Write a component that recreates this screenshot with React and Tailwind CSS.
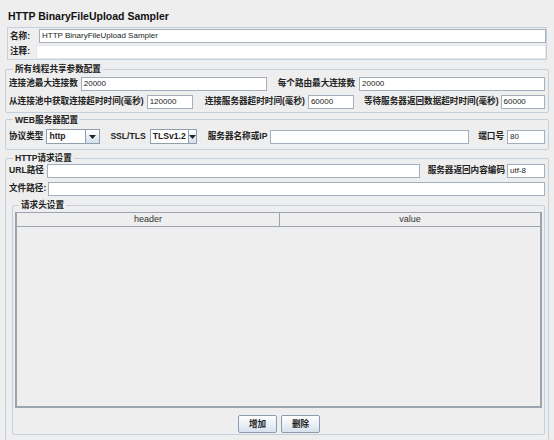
// App.jsx — JMeter-style "HTTP BinaryFileUpload Sampler" settings panel.

const cjk = { fontFamily: '"Liberation Sans", "Noto Sans CJK SC", sans-serif' };

function Field({ value = '', className = '' }) {
  return (
    <div
      className={`h-[14px] bg-white border border-[#a3afbb] flex items-center px-[2px] text-[8px] text-[#222] leading-none overflow-hidden whitespace-nowrap ${className}`}
    >
      {value}
    </div>
  );
}

function Label({ children, className = '' }) {
  return (
    <span className={`text-[8.6px] font-bold text-[#222] whitespace-nowrap leading-none ${className}`}>
      {children}
    </span>
  );
}

function Combo({ value, className = '' }) {
  return (
    <div className={`h-[15px] flex border border-[#8f9fae] bg-white ${className}`}>
      <div className="flex-1 flex items-center px-[2px] text-[8.6px] font-bold text-[#222] leading-none">{value}</div>
      <div className="w-[14px] border-l border-[#8f9fae] bg-gradient-to-b from-[#ffffff] to-[#d3dfeb] flex items-center justify-center">
        <svg width="7" height="4" viewBox="0 0 7 4">
          <path d="M0 0 H7 L3.5 4 Z" fill="#222" />
        </svg>
      </div>
    </div>
  );
}

function Group({ title, className = '', children }) {
  return (
    <fieldset className={`border border-[#c4d0dc] rounded-[2px] ${className}`}>
      <legend className="ml-[4px] px-[2px] text-[8.6px] font-bold text-[#222] leading-none">{title}</legend>
      {children}
    </fieldset>
  );
}

function Button({ children }) {
  return (
    <div className="w-[39px] h-[18px] border border-[#8d9cad] rounded-[2px] bg-gradient-to-b from-[#ffffff] to-[#d6e2ee] flex items-center justify-center text-[8.6px] font-bold text-[#222]">
      {children}
    </div>
  );
}

export default function App() {
  return (
    <div className="w-[554px] h-[440px] overflow-hidden bg-[#eeeeee] px-[5px] pt-[9px]" style={cjk}>
      <div className="pl-[3px] text-[10.5px] font-bold text-[#111] leading-[14px]">HTTP BinaryFileUpload Sampler</div>

      <div className="mt-[4px] ml-[2px] mr-[2px] border border-[#c4d0dc] flex flex-col">
        <div className="flex items-center h-[16px] pl-[2px]">
          <Label className="w-[29px]">名称:</Label>
          <Field value="HTTP BinaryFileUpload Sampler" className="flex-1" />
        </div>
        <div className="flex items-center h-[15px] pl-[2px]">
          <Label className="w-[26px]">注释:</Label>
          <Field className="flex-1 border-[#e2e6ea]" />
        </div>
      </div>

      <Group title="所有线程共享参数配置" className="mt-[5px] px-[3px] pb-[3px] flex flex-col gap-[4px]">
        <div className="flex items-center mt-[3px]">
          <Label>连接池最大连接数</Label>
          <Field value="20000" className="flex-1 ml-[3px]" />
          <Label className="ml-[11px]">每个路由最大连接数</Label>
          <Field value="20000" className="flex-1 ml-[4px]" />
        </div>
        <div className="flex items-center">
          <Label>从连接池中获取连接超时时间(毫秒)</Label>
          <Field value="120000" className="w-[46px] ml-[3px]" />
          <Label className="ml-[12px]">连接服务器超时时间(毫秒)</Label>
          <Field value="60000" className="w-[46px] ml-[3px]" />
          <Label className="ml-[10px]">等待服务器返回数据超时时间(毫秒)</Label>
          <Field value="60000" className="flex-1 ml-[2px]" />
        </div>
      </Group>

      <Group title="WEB服务器配置" className="mt-[3px] px-[3px] pb-[5px]">
        <div className="flex items-center mt-[5px]">
          <Label>协议类型</Label>
          <Combo value="http" className="w-[54px] ml-[3px]" />
          <Label className="ml-[10px]">SSL/TLS</Label>
          <Combo value="TLSv1.2" className="w-[47px] ml-[4px]" />
          <Label className="ml-[11px]">服务器名称或IP</Label>
          <Field className="w-[199px] ml-[3px]" />
          <Label className="ml-auto">端口号</Label>
          <Field value="80" className="w-[38px] ml-[3px]" />
        </div>
      </Group>

      <Group title="HTTP请求设置" className="mt-[4px] px-[3px] h-[300px] flex flex-col">
        <div className="flex items-center mt-[1px]">
          <Label>URL路径</Label>
          <Field className="w-[373px] ml-[3px]" />
          <Label className="ml-auto">服务器返回内容编码</Label>
          <Field value="utf-8" className="w-[38px] ml-[2px]" />
        </div>
        <div className="flex items-center mt-[4px]">
          <Label>文件路径:</Label>
          <Field className="flex-1 ml-[2px]" />
        </div>
        <Group title="请求头设置" className="mt-[5px] ml-[3px] mr-0 px-[2px] h-[234px] flex flex-col">
          <div className="mt-[3px] h-[196px] border-l-2 border-b-2 border-t border-r-2 border-[#9aa5b0] flex flex-col">
            <div className="flex h-[14px] border-b border-[#9aa5b0] text-[9px] text-[#333] leading-none">
              <div className="w-[263px] flex items-center justify-center border-r border-[#9aa5b0]">header</div>
              <div className="flex-1 flex items-center justify-center">value</div>
            </div>
          </div>
          <div className="flex justify-center gap-[4px] mt-[7px] pl-[1px]">
            <Button>增加</Button>
            <Button>删除</Button>
          </div>
        </Group>
      </Group>
    </div>
  );
}
